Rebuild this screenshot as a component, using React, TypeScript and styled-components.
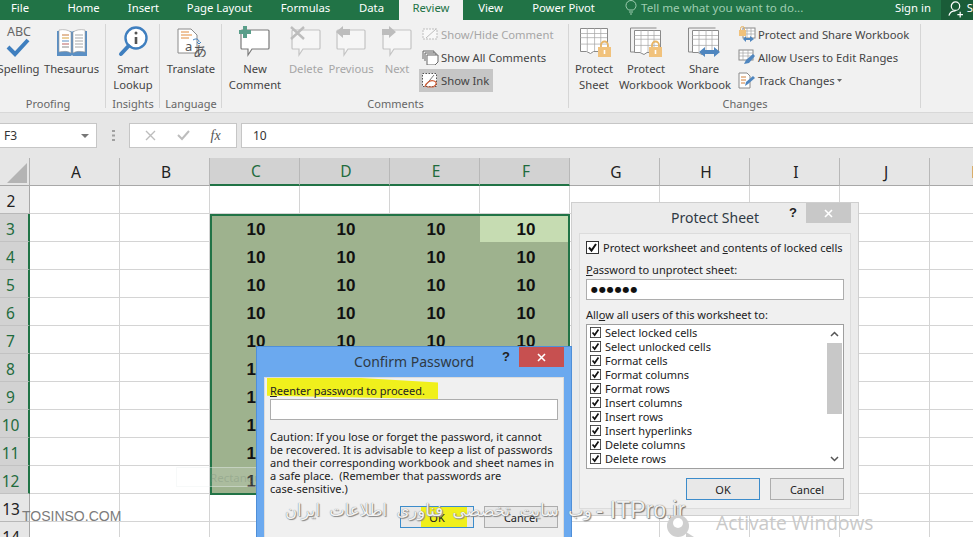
import React from 'react'
import styled, { createGlobalStyle } from 'styled-components'

const UI_FONT = '"Noto Sans", "Open Sans", sans-serif'

const GlobalStyle = createGlobalStyle`
  html, body {
    margin: 0;
    padding: 0;
    width: 973px;
    height: 537px;
    overflow: hidden;
    background: #fff;
    font-family: ${UI_FONT};
  }
`

const Stage = styled.div`
  position: relative;
  width: 973px;
  height: 537px;
  overflow: hidden;
`

/* ---------- tabs ---------- */
const TabBar = styled.div`
  display: flex;
  align-items: stretch;
  height: 20px;
  background: #217346;
  color: #fff;
  font-size: 11.3px;
  line-height: 16px;
`
const Tab = styled.div<{ $width: number; $gap?: number; $active?: boolean }>`
  width: ${p => p.$width}px;
  margin-right: ${p => p.$gap || 0}px;
  flex: none;
  text-align: center;
  background: ${p => (p.$active ? '#f1f1f1' : 'transparent')};
  color: ${p => (p.$active ? '#217346' : '#fff')};
`
const TellMe = styled.div`
  display: flex;
  align-items: flex-start;
  gap: 4px;
  width: 270px;
  flex: none;
  margin-left: 16px;
  box-sizing: border-box;
  font-size: 11.6px;
  color: #9fcdb1;
`
const SignIn = styled.div`
  width: 46px;
  flex: none;
`
const ShareArea = styled.div`
  flex: 1;
  display: flex;
  gap: 1px;
  padding-left: 7px;
  background: #1a5c38;
  overflow: hidden;
`

/* ---------- ribbon ---------- */
const Ribbon = styled.div`
  display: flex;
  height: 92px;
  margin-left: -10px;
  background: #f1f1f1;
  font-size: 11.25px;
  color: #444;
`
const Group = styled.div<{ $width: number }>`
  position: relative;
  width: ${p => p.$width}px;
  flex: none;
  display: flex;
  flex-direction: column;
  box-sizing: border-box;
  &::after {
    content: '';
    position: absolute;
    right: 0;
    top: 4px;
    bottom: 4px;
    width: 1px;
    background: #d6d6d6;
  }
`
const GroupBody = styled.div<{ $pad?: number }>`
  flex: 1;
  display: flex;
  padding-left: ${p => p.$pad || 0}px;
`
const GroupLabel = styled.div`
  height: 16px;
  line-height: 16px;
  text-align: center;
  font-size: 11px;
  color: #666;
`
const LargeButton = styled.div<{ $width: number; $disabled?: boolean }>`
  width: ${p => p.$width}px;
  flex: none;
  display: flex;
  flex-direction: column;
  align-items: center;
  text-align: center;
  line-height: 16px;
  white-space: nowrap;
  color: ${p => (p.$disabled ? '#a6a6a6' : '#444')};
`
const LargeIcon = styled.div`
  height: 41px;
  box-sizing: border-box;
  display: flex;
  align-items: flex-end;
  justify-content: center;
  padding-bottom: 4px;
`
const SmallColumn = styled.div`
  display: flex;
  flex-direction: column;
  align-items: flex-start;
  padding-top: 3px;
`
const SmallButton = styled.div<{ $disabled?: boolean; $pressed?: boolean }>`
  height: 23px;
  display: flex;
  align-items: center;
  gap: 2px;
  padding: 0 4px 0 3px;
  white-space: nowrap;
  background: ${p => (p.$pressed ? '#c6c6c6' : 'transparent')};
  color: ${p => (p.$disabled ? '#a6a6a6' : '#444')};
`

/* ---------- formula bar ---------- */
const FormulaBar = styled.div`
  height: 46px;
  box-sizing: border-box;
  display: flex;
  align-items: center;
  background: #e6e6e6;
  border-top: 1px solid #d8d8d8;
  font-size: 12px;
  color: #333;
`
const Field = styled.div<{ $width?: number }>`
  height: 25px;
  box-sizing: border-box;
  display: flex;
  align-items: center;
  background: #fff;
  border: 1px solid #c6c6c6;
  ${p => (p.$width ? `width: ${p.$width}px; flex: none;` : 'flex: 1;')}
`
const NameBox = styled(Field)`
  margin-left: -1px;
  padding: 0 7px 0 4px;
  justify-content: space-between;
`
const Grip = styled.div`
  width: 32px;
  flex: none;
  display: flex;
  justify-content: center;
`
const FxBox = styled(Field)`
  justify-content: space-around;
  padding: 0 5px;
  margin-right: 4px;
`
const FxGlyph = styled.i`
  font: italic 14px "Liberation Serif", serif;
  color: #555;
`
const FormulaValue = styled(Field)`
  padding-left: 11px;
  border-right: none;
`

/* ---------- sheet ---------- */
const Sheet = styled.div`
  display: grid;
  grid-template-columns: 30px repeat(11, 90px);
  grid-auto-rows: 28px;
  font-family: ${UI_FONT};
`
const Corner = styled.div`
  background: #e6e6e6;
  border-right: 1px solid #b0b0b0;
  border-bottom: 1px solid #a8a8a8;
  box-sizing: border-box;
  display: flex;
  align-items: flex-end;
  justify-content: flex-end;
  padding: 0 2px 2px 0;
`
const ColHead = styled.div<{ $on: boolean }>`
  box-sizing: border-box;
  display: flex;
  align-items: center;
  justify-content: center;
  padding-left: 3px;
  font-size: 15.5px;
  background: ${p => (p.$on ? '#d2d2d2' : '#e6e6e6')};
  color: ${p => (p.$on ? '#1f6b3d' : '#222')};
  border-right: 1px solid #b8b8b8;
  border-bottom: ${p => (p.$on ? '2px solid #217346' : '1px solid #a8a8a8')};
`
const RowHead = styled.div<{ $on: boolean }>`
  box-sizing: border-box;
  display: flex;
  align-items: center;
  justify-content: center;
  padding: 2px 7px 0 0;
  font-size: 15.5px;
  background: ${p => (p.$on ? '#d2d2d2' : '#e6e6e6')};
  color: ${p => (p.$on ? '#1f6b3d' : '#222')};
  border-right: ${p => (p.$on ? '2px solid #217346' : '1px solid #a8a8a8')};
  border-bottom: 1px solid ${p => (p.$on ? '#c2c2c2' : '#b8b8b8')};
`
const Cell = styled.div<{ $fill?: string }>`
  box-sizing: border-box;
  display: flex;
  align-items: center;
  justify-content: center;
  padding: 3px 0 0 2px;
  font: bold 17px "Liberation Sans", Arial, sans-serif;
  color: #111;
  background: ${p => p.$fill || '#fff'};
  border-right: ${p => (p.$fill ? 'none' : '1px solid #d4d4d4')};
  border-bottom: ${p => (p.$fill ? 'none' : '1px solid #d4d4d4')};
`
const SelectionFrame = styled.div`
  position: absolute;
  left: 210px;
  top: 214px;
  width: 360px;
  height: 281px;
  box-sizing: border-box;
  border: 2px solid #217346;
  pointer-events: none;
`
const SnipHint = styled.div`
  position: absolute;
  left: 176px;
  top: 467px;
  width: 105px;
  height: 20px;
  padding-left: 33px;
  box-sizing: border-box;
  font-size: 11.5px;
  line-height: 20px;
  white-space: nowrap;
  background: rgba(255, 255, 255, 0.14);
  border: 1px solid rgba(235, 240, 240, 0.4);
  color: rgba(120, 140, 120, 0.35);
  overflow: hidden;
`

/* ---------- dialogs ---------- */
const Window = styled.div<{ $left: number; $top: number; $width: number; $height: number; $active?: boolean }>`
  position: absolute;
  left: ${p => p.$left}px;
  top: ${p => p.$top}px;
  width: ${p => p.$width}px;
  height: ${p => p.$height}px;
  box-sizing: border-box;
  display: flex;
  flex-direction: column;
  padding: 0 7px 6px;
  background: ${p => (p.$active ? '#6ba9ef' : '#ebebeb')};
  border: 1px solid ${p => (p.$active ? '#4f8fd8' : '#cfcfcf')};
  color: #222;
  font-size: 11px;
`
const TitleBar = styled.div`
  height: 30px;
  flex: none;
  display: grid;
  grid-template-columns: 1fr auto 1fr;
  align-items: start;
`
const TitleText = styled.div`
  grid-column: 2;
  font-size: 14px;
  line-height: 29px;
  color: #2f3a45;
  white-space: nowrap;
`
const Caption = styled.div`
  grid-column: 3;
  display: flex;
  justify-content: flex-end;
  align-items: flex-start;
  gap: 9px;
`
const Help = styled.div`
  font: bold 13px "Liberation Sans", sans-serif;
  line-height: 20px;
  color: #222;
`
const Close = styled.div<{ $red?: boolean }>`
  width: 45px;
  height: 20px;
  display: flex;
  align-items: center;
  justify-content: center;
  background: ${p => (p.$red ? '#c75050' : '#c8c8c8')};
`
const Panel = styled.div<{ $pad: number }>`
  position: relative;
  flex: 1;
  display: flex;
  flex-direction: column;
  padding: 0 ${p => p.$pad}px;
  background: #f0f0f0;
  border: 1px solid #dcdcdc;
`
const CheckRow = styled.label<{ $size: number; $height: number; $top?: number }>`
  display: flex;
  align-items: center;
  gap: 4px;
  height: ${p => p.$height}px;
  margin-top: ${p => p.$top || 0}px;
  white-space: nowrap;
  & > svg { flex: none; width: ${p => p.$size}px; height: ${p => p.$size}px; }
`
const FieldLabel = styled.div<{ $top: number }>`
  margin-top: ${p => p.$top}px;
  line-height: 15px;
  white-space: nowrap;
`
const TextBox = styled.div<{ $top: number }>`
  position: relative;
  height: 21px;
  margin-top: ${p => p.$top}px;
  box-sizing: border-box;
  flex: none;
  display: flex;
  align-items: center;
  padding-left: 4px;
  background: #fff;
  border: 1px solid #adadad;
`
const Dots = styled.span`
  font: 8px "DejaVu Sans", sans-serif;
  letter-spacing: 0.9px;
  color: #111;
`
const ListBox = styled.div`
  height: 145px;
  margin-top: 2px;
  box-sizing: border-box;
  flex: none;
  display: flex;
  background: #fff;
  border: 1px solid #9f9f9f;
`
const ListItems = styled.div`
  flex: 1;
  padding-left: 3px;
`
const ScrollTrack = styled.div`
  width: 17px;
  flex: none;
  display: flex;
  flex-direction: column;
  align-items: center;
  background: #fff;
`
const ScrollArrow = styled.div`
  height: 18px;
  display: flex;
  align-items: center;
  justify-content: center;
`
const ScrollThumb = styled.div`
  width: 15px;
  height: 71px;
  background: #c8c8c8;
`
const ScrollGap = styled.div`
  flex: 1;
`
const ButtonRow = styled.div<{ $top: number }>`
  position: relative;
  display: flex;
  justify-content: flex-end;
  gap: 10px;
  margin-top: ${p => p.$top}px;
`
const DialogButton = styled.div<{ $default?: boolean }>`
  position: relative;
  width: 74px;
  height: 22px;
  box-sizing: border-box;
  display: flex;
  align-items: center;
  justify-content: center;
  font-size: 11px;
  background: #e8e8e8;
  border: 1px solid ${p => (p.$default ? '#3c8ccb' : '#adadad')};
`
const LabelMarker = styled.div`
  position: absolute;
  left: 2px;
  top: 0;
  width: 171px;
  height: 21px;
  background: #f0f01c;
  clip-path: polygon(0 0, 55% 0, 100% 22%, 100% 100%, 0 85%);
`
const ButtonMarker = styled.div`
  position: absolute;
  left: 20px;
  top: 0;
  width: 46px;
  height: 20px;
  background: #f0f01c;
`
const OverMarker = styled.div`
  position: relative;
`
const Caution = styled.div`
  position: relative;
  margin-top: 10px;
  line-height: 13px;
  white-space: nowrap;
`

/* ---------- watermarks ---------- */
const BrandMark = styled.div`
  position: absolute;
  left: 22px;
  top: 508px;
  font: 14px "Liberation Sans", Arial, sans-serif;
  color: #7c7c7c;
  white-space: nowrap;
`
const PersianMark = styled.div`
  position: absolute;
  left: 285px;
  top: 497px;
  display: flex;
  align-items: center;
  gap: 4px;
  white-space: nowrap;
`
const PersianText = styled.span`
  direction: rtl;
  font: 16.5px "DejaVu Sans", sans-serif;
  color: #f4f4f4;
  text-shadow: 0 0 1px #666, 1px 1px 1px #888;
  word-spacing: 4px;
`
const SiteText = styled.span`
  font: 23px "Liberation Sans", Arial, sans-serif;
  color: #f0f0f0;
  text-shadow: 0 0 1px #555, 1px 1px 1px #777;
`
const ActivateMark = styled.div`
  position: absolute;
  left: 716px;
  top: 509px;
  font: 19.2px "Open Sans", sans-serif;
  color: #c9c9c9;
  white-space: nowrap;
`
const KeyMark = styled.svg`
  position: absolute;
  left: 662px;
  top: 512px;
`

/* ---------- drawings ---------- */
const SpellingIcon = () => (
  <svg width="40" height="36" viewBox="0 0 40 36">
    <text x="20" y="15" textAnchor="middle" fontFamily="Noto Sans, sans-serif" fontSize="12.500" fill="#666">ABC</text>
    <path d="M9 26l7 7 13-14" fill="none" stroke="#3f7fbf" strokeWidth="4" />
  </svg>
)
const ThesaurusIcon = () => (
  <svg width="34" height="28" viewBox="0 0 34 28">
    <path d="M2 2h14l1 1 1-1h14v25H18l-1-1-1 1H2z" fill="#5a8fc4" />
    <path d="M4 1c5-1 9 0 12 2v21c-3-2-7-2-12-1zM30 1c-5-1-9 0-12 2v21c3-2 7-2 12-1z" fill="#fff" stroke="#9a9a9a" strokeWidth=".6" />
    <path d="M7 6h7" stroke="#c77b3a" />
    <path d="M7 9h7" stroke="#d9a23c" />
    <path d="M7 12h7" stroke="#5a8fc4" />
    <path d="M7 15h7" stroke="#b86060" />
    <path d="M7 18h7" stroke="#8a8a8a" />
    <path d="M20 6h8M20 9h8M20 12h8M20 15h8M20 18h8" stroke="#a8a8a8" />
  </svg>
)
const LookupIcon = () => (
  <svg width="32" height="32" viewBox="0 0 32 32">
    <circle cx="19" cy="13" r="10.500" fill="#fff" stroke="#3f7fbf" strokeWidth="2.400" />
    <path d="M11.500 21L4 29" stroke="#3f7fbf" strokeWidth="4" strokeLinecap="round" />
    <circle cx="19" cy="8" r="1.500" fill="#555" />
    <path d="M19 12v7" stroke="#555" strokeWidth="2.600" />
  </svg>
)
const TranslateIcon = () => (
  <svg width="32" height="30" viewBox="0 0 32 30">
    <path d="M3 2h13l6 6v18H3z" fill="#fff" stroke="#8a8a8a" />
    <path d="M6 5h8M6 8h11M6 11h8" stroke="#e08a3c" />
    <path d="M18 13c3-2 6-1 6 2M24 17l-2-2M24 17l2-2" fill="none" stroke="#3f7fbf" />
    <text x="10" y="24" fontFamily="Noto Sans, sans-serif" fontSize="13" fill="#555">a</text>
    <text x="18" y="29" fontFamily="Noto Sans CJK JP, sans-serif" fontSize="14" fill="#555">あ</text>
  </svg>
)
const Bubble = ({ mark, faded }: { mark: 'plus' | 'x' | 'left' | 'right'; faded?: boolean }) => {
  const line = faded ? '#c4c4c4' : '#7a7a7a'
  return (
    <svg width="32" height="32" viewBox="0 0 32 32">
      <path d="M3 5h26a1 1 0 0 1 1 1v17a1 1 0 0 1-1 1H13l-4 6v-6H3a1 1 0 0 1-1-1V6a1 1 0 0 1 1-1z" fill={faded ? '#f6f6f6' : '#fff'} stroke={line} strokeWidth="1.200" />
      {mark === 'plus' && <path d="M4 1h4v4h4v4H8v4H4V9H0V5h4z" fill="#5a9e8a" />}
      {mark === 'x' && <path d="M1 2l13 12M14 2L1 14" stroke="#bdbdbd" strokeWidth="2.400" />}
      {mark === 'left' && <path d="M1 7l7-6v3h7v6H8v3z" fill="#bdbdbd" />}
      {mark === 'right' && <path d="M15 7L8 1v3H1v6h7v3z" fill="#bdbdbd" />}
    </svg>
  )
}
const ShowHideIcon = () => (
  <svg width="17" height="15" viewBox="0 0 17 15">
    <rect x="1" y="2" width="14" height="10" fill="#f8f8f8" stroke="#bdbdbd" strokeDasharray="2 1" />
    <path d="M4 11l10-9" stroke="#bdbdbd" />
  </svg>
)
const ShowAllIcon = () => (
  <svg width="17" height="15" viewBox="0 0 17 15">
    <path d="M1 1h11v2M1 1v8M3 3h11v2M3 3v8" fill="none" stroke="#666" />
    <path d="M5 5h11v7l-3 3H5z" fill="#fff" stroke="#666" />
  </svg>
)
const ShowInkIcon = () => (
  <svg width="17" height="15" viewBox="0 0 17 15">
    <rect x=".5" y=".5" width="14" height="13" fill="#fff" stroke="#555" strokeDasharray="1.500 1.500" />
    <path d="M3 13L12 2" stroke="#777" />
    <path d="M3 14c1-5 6-7 9-6 3 1 3 4-1 6H5" fill="none" stroke="#d0603a" strokeWidth="1.200" />
  </svg>
)
const Lock = ({ x, y }: { x: number; y: number }) => (
  <g transform={`translate(${x} ${y})`}>
    <path d="M3 6V4a3.500 3.500 0 0 1 7 0v2" fill="none" stroke="#e8b565" strokeWidth="1.800" />
    <rect x="0" y="6" width="13" height="10" fill="#f1c27c" />
    <path d="M6.500 9v4" stroke="#fff" strokeWidth="1.600" />
  </g>
)
const SheetGrid = ({ x, y, w, h }: { x: number; y: number; w: number; h: number }) => (
  <g transform={`translate(${x} ${y})`}>
    <path d={`M.5 .5h${w}v${h}H${w / 2}l-3 2-4-2H.5z`} fill="#fff" stroke="#8a8a8a" />
    <path d={`M0 5.500h${w}M0 ${h * 0.42}h${w}M0 ${h * 0.7}h${w}M${w * 0.27} 0v${h}M${w * 0.54} 0v${h}M${w * 0.77} 0v${h}`} stroke="#a4a4a4" strokeWidth=".7" />
  </g>
)
const ProtectSheetIcon = () => (
  <svg width="33" height="31" viewBox="0 0 33 31">
    <SheetGrid x={2} y={2} w={27} h={23} />
    <Lock x={20} y={15} />
  </svg>
)
const ProtectBookIcon = () => (
  <svg width="34" height="31" viewBox="0 0 34 31">
    <path d="M1.500 2v24h4M1.500 2h26" fill="none" stroke="#8a8a8a" />
    <SheetGrid x={5} y={4} w={26} h={22} />
    <Lock x={20} y={15} />
  </svg>
)
const ShareBookIcon = () => (
  <svg width="36" height="31" viewBox="0 0 36 31">
    <path d="M2.500 2v24h4M2.500 2h27" fill="none" stroke="#8a8a8a" />
    <SheetGrid x={6} y={4} w={26} h={22} />
    <path d="M13 26l6-5v3h9v-3l6 5-6 5v-3h-9v3z" fill="#4f86bf" />
  </svg>
)
const ProtectShareIcon = () => (
  <svg width="18" height="17" viewBox="0 0 18 17">
    <rect x="5" y="2" width="12" height="10" fill="#fff" stroke="#8a8a8a" />
    <path d="M5 5h12M5 8h12M9 2v10M13 2v10" stroke="#a4a4a4" strokeWidth=".7" />
    <rect x="1" y="4" width="7" height="6" fill="#f1c27c" />
    <path d="M2.500 4V2.500a2 2 0 0 1 4 0V4" fill="none" stroke="#e8b565" />
    <path d="M5 13l3-3v2h4v-2l4 3-4 3v-2H8v2z" fill="#4f86bf" />
  </svg>
)
const AllowUsersIcon = () => (
  <svg width="18" height="17" viewBox="0 0 18 17">
    <rect x="1" y="1" width="14" height="10" fill="#fff" stroke="#8a8a8a" />
    <path d="M1 4h14M1 7h14M5 1v10M10 1v10" stroke="#a4a4a4" strokeWidth=".7" />
    <path d="M6 15l2-4 7-6 2 2-6 7z" fill="#4f86bf" />
  </svg>
)
const TrackIcon = () => (
  <svg width="18" height="17" viewBox="0 0 18 17">
    <path d="M1 1h8l3 3v12H1z" fill="#fff" stroke="#8a8a8a" />
    <path d="M3 5h5M3 8h5M3 11h4" stroke="#d0803c" />
    <path d="M7 14l1-4 7-6 2 2-7 6z" fill="#4f86bf" />
  </svg>
)
const Tick = () => (
  <svg viewBox="0 0 13 13">
    <rect x=".5" y=".5" width="12" height="12" fill="#fff" stroke="#333" />
    <path d="M3 6.500l2.500 3L10 3" fill="none" stroke="#111" strokeWidth="2" />
  </svg>
)
const Chevron = ({ up }: { up?: boolean }) => (
  <svg width="9" height="6" viewBox="0 0 9 6">
    <path d={up ? 'M1 5l3.500-3.500L8 5' : 'M1 1l3.500 3.500L8 1'} fill="none" stroke="#555" strokeWidth="1.500" />
  </svg>
)
const CrossGlyph = () => (
  <svg width="9" height="9" viewBox="0 0 9 9">
    <path d="M1 1l7 7M8 1L1 8" stroke="#fff" strokeWidth="1.600" />
  </svg>
)

const COLUMNS = ['A', 'B', 'C', 'D', 'E', 'F', 'G', 'H', 'I', 'J', 'K']
const PERMISSIONS = [
  'Select locked cells',
  'Select unlocked cells',
  'Format cells',
  'Format columns',
  'Format rows',
  'Insert columns',
  'Insert rows',
  'Insert hyperlinks',
  'Delete columns',
  'Delete rows',
]

const isSelected = (col: number, row: number) => col >= 2 && col <= 5 && row >= 3 && row <= 12

const App: React.FC = () => {
  const rows = Array.from({ length: 13 }, (_, i) => i + 2)

  return (
    <Stage>
      <GlobalStyle />

      <TabBar>
        <Tab $width={40} $gap={12}>File</Tab>
        <Tab $width={63}>Home</Tab>
        <Tab $width={57}>Insert</Tab>
        <Tab $width={95}>Page Layout</Tab>
        <Tab $width={77}>Formulas</Tab>
        <Tab $width={55}>Data</Tab>
        <Tab $width={64} $active>Review</Tab>
        <Tab $width={55}>View</Tab>
        <Tab $width={91}>Power Pivot</Tab>
        <TellMe>
          <svg width="12" height="15" viewBox="0 0 12 15">
            <path d="M3.500 10C2 8.500 1 7.500 1 5.500a5 5 0 0 1 10 0c0 2-1 3-2.500 4.500zM4 12h4M5 14h2" fill="none" stroke="#9fcdb1" />
          </svg>
          <span>Tell me what you want to do...</span>
        </TellMe>
        <SignIn>Sign in</SignIn>
        <ShareArea>
          <svg width="19" height="18" viewBox="0 0 19 18">
            <circle cx="8" cy="6" r="4.500" fill="none" stroke="#fff" strokeWidth="1.300" />
            <path d="M1 16c1-4 4-5 7-5M13 12v6M10 15h6" fill="none" stroke="#fff" strokeWidth="1.300" />
          </svg>
          <span>S</span>
        </ShareArea>
      </TabBar>

      <Ribbon>
        <Group $width={116}>
          <GroupBody $pad={7}>
            <LargeButton $width={43}><LargeIcon><SpellingIcon /></LargeIcon>Spelling</LargeButton>
            <LargeButton $width={63}><LargeIcon><ThesaurusIcon /></LargeIcon>Thesaurus</LargeButton>
          </GroupBody>
          <GroupLabel>Proofing</GroupLabel>
        </Group>
        <Group $width={54}>
          <GroupBody>
            <LargeButton $width={54}><LargeIcon><LookupIcon /></LargeIcon>Smart<br />Lookup</LargeButton>
          </GroupBody>
          <GroupLabel>Insights</GroupLabel>
        </Group>
        <Group $width={62}>
          <GroupBody>
            <LargeButton $width={62}><LargeIcon><TranslateIcon /></LargeIcon>Translate</LargeButton>
          </GroupBody>
          <GroupLabel>Language</GroupLabel>
        </Group>
        <Group $width={347}>
          <GroupBody $pad={3}>
            <LargeButton $width={60}><LargeIcon><Bubble mark="plus" /></LargeIcon>New<br />Comment</LargeButton>
            <LargeButton $width={42} $disabled><LargeIcon><Bubble mark="x" faded /></LargeIcon>Delete</LargeButton>
            <LargeButton $width={48} $disabled><LargeIcon><Bubble mark="left" faded /></LargeIcon>Previous</LargeButton>
            <LargeButton $width={44} $disabled><LargeIcon><Bubble mark="right" faded /></LargeIcon>Next</LargeButton>
            <SmallColumn>
              <SmallButton $disabled><ShowHideIcon />Show/Hide Comment</SmallButton>
              <SmallButton><ShowAllIcon />Show All Comments</SmallButton>
              <SmallButton $pressed><ShowInkIcon />Show Ink</SmallButton>
            </SmallColumn>
          </GroupBody>
          <GroupLabel>Comments</GroupLabel>
        </Group>
        <Group $width={352}>
          <GroupBody>
            <LargeButton $width={50}><LargeIcon><ProtectSheetIcon /></LargeIcon>Protect<br />Sheet</LargeButton>
            <LargeButton $width={54}><LargeIcon><ProtectBookIcon /></LargeIcon>Protect<br />Workbook</LargeButton>
            <LargeButton $width={62}><LargeIcon><ShareBookIcon /></LargeIcon>Share<br />Workbook</LargeButton>
            <SmallColumn>
              <SmallButton><ProtectShareIcon />Protect and Share Workbook</SmallButton>
              <SmallButton><AllowUsersIcon />Allow Users to Edit Ranges</SmallButton>
              <SmallButton>
                <TrackIcon />Track Changes
                <svg width="5" height="3" viewBox="0 0 5 3"><path d="M0 0h5L2.500 3z" fill="#666" /></svg>
              </SmallButton>
            </SmallColumn>
          </GroupBody>
          <GroupLabel>Changes</GroupLabel>
        </Group>
      </Ribbon>

      <FormulaBar>
        <NameBox $width={98}>
          F3
          <svg width="8" height="4" viewBox="0 0 8 4"><path d="M0 0h8L4 4z" fill="#777" /></svg>
        </NameBox>
        <Grip>
          <svg width="3" height="12" viewBox="0 0 3 12">
            <path d="M0 1h3M0 5.500h3M0 10h3" stroke="#a0a0a0" strokeWidth="2" />
          </svg>
        </Grip>
        <FxBox $width={108}>
          <svg width="11" height="11" viewBox="0 0 11 11"><path d="M1 1l9 9M10 1l-9 9" stroke="#bdbdbd" strokeWidth="1.400" /></svg>
          <svg width="13" height="11" viewBox="0 0 13 11"><path d="M1 5l4 4 7-8" fill="none" stroke="#bdbdbd" strokeWidth="2" /></svg>
          <FxGlyph>fx</FxGlyph>
        </FxBox>
        <FormulaValue>10</FormulaValue>
      </FormulaBar>

      <Sheet>
        <Corner>
          <svg width="20" height="20" viewBox="0 0 20 20"><path d="M20 0v20H0z" fill="#b4b4b4" /></svg>
        </Corner>
        {COLUMNS.map((name, c) => (
          <ColHead key={name} $on={c >= 2 && c <= 5}>{name}</ColHead>
        ))}
        {rows.map(row => (
          <React.Fragment key={row}>
            <RowHead $on={row >= 3 && row <= 12}>{row}</RowHead>
            {COLUMNS.map((name, c) => {
              const selected = isSelected(c, row)
              const active = c === 5 && row === 3
              return (
                <Cell key={name} $fill={active ? '#c6dcb2' : selected ? '#9eb28e' : undefined}>
                  {selected ? 10 : ''}
                </Cell>
              )
            })}
          </React.Fragment>
        ))}
      </Sheet>
      <SelectionFrame />
      <SnipHint>Rectangular Snip</SnipHint>

      <Window $left={571} $top={202} $width={288} $height={314}>
        <TitleBar>
          <TitleText>Protect Sheet</TitleText>
          <Caption>
            <Help>?</Help>
            <Close><CrossGlyph /></Close>
          </Caption>
        </TitleBar>
        <Panel $pad={6}>
          <CheckRow $size={13} $height={16} $top={5}>
            <Tick />
            <span>Protect worksheet and <u>c</u>ontents of locked cells</span>
          </CheckRow>
          <FieldLabel $top={7}><u>P</u>assword to unprotect sheet:</FieldLabel>
          <TextBox $top={2}><Dots>●●●●●●</Dots></TextBox>
          <FieldLabel $top={7}>All<u>o</u>w all users of this worksheet to:</FieldLabel>
          <ListBox>
            <ListItems>
              {PERMISSIONS.map(item => (
                <CheckRow key={item} $size={11} $height={14}>
                  <Tick />
                  <span>{item}</span>
                </CheckRow>
              ))}
            </ListItems>
            <ScrollTrack>
              <ScrollArrow><Chevron up /></ScrollArrow>
              <ScrollThumb />
              <ScrollGap />
              <ScrollArrow><Chevron /></ScrollArrow>
            </ScrollTrack>
          </ListBox>
          <ButtonRow $top={9}>
            <DialogButton $default>OK</DialogButton>
            <DialogButton>Cancel</DialogButton>
          </ButtonRow>
        </Panel>
      </Window>

      <Window $left={256} $top={346} $width={316} $height={230} $active>
        <TitleBar>
          <TitleText>Confirm Password</TitleText>
          <Caption>
            <Help>?</Help>
            <Close $red><CrossGlyph /></Close>
          </Caption>
        </TitleBar>
        <Panel $pad={5}>
          <LabelMarker />
          <OverMarker>
            <FieldLabel $top={5}><u>R</u>eenter password to proceed.</FieldLabel>
          </OverMarker>
          <TextBox $top={1} />
          <Caution>
            Caution: If you lose or forget the password, it cannot<br />
            be recovered. It is advisable to keep a list of passwords<br />
            and their corresponding workbook and sheet names in<br />
            a safe place.&nbsp; (Remember that passwords are<br />
            case-sensitive.)
          </Caution>
          <ButtonRow $top={11}>
            <DialogButton $default>
              <ButtonMarker />
              <OverMarker>OK</OverMarker>
            </DialogButton>
            <DialogButton>Cancel</DialogButton>
          </ButtonRow>
        </Panel>
      </Window>

      <BrandMark>TOSINSO.COM</BrandMark>
      <PersianMark>
        <PersianText>وب سایت تخصصی فناوری اطلاعات ایران</PersianText>
        <SiteText>- ITPro.ir</SiteText>
      </PersianMark>
      <KeyMark width="40" height="25" viewBox="0 0 40 25">
        <circle cx="16" cy="14" r="11" fill="#cfcfcf" />
        <circle cx="16" cy="11" r="5" fill="#fff" />
        <path d="M24 20l8 5h-8z" fill="#cfcfcf" />
      </KeyMark>
      <ActivateMark>Activate Windows</ActivateMark>
    </Stage>
  )
}

export default App
